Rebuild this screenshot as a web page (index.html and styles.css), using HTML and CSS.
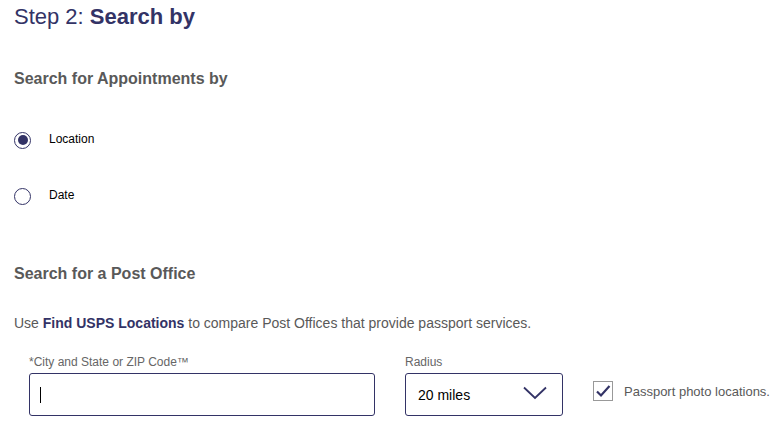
FILE: index.html
```html
<!DOCTYPE html>
<html>
<head>
<meta charset="utf-8">
<link rel="stylesheet" href="styles.css">
</head>
<body>
<div class="page">
  <h1 class="title">Step 2: <strong>Search by</strong></h1>
  <h2 class="section first">Search for Appointments by</h2>
  <div class="radios">
    <label class="radio-row"><span class="radio checked"></span><span class="radio-text">Location</span></label>
    <label class="radio-row"><span class="radio"></span><span class="radio-text">Date</span></label>
  </div>
  <h2 class="section second">Search for a Post Office</h2>
  <p class="intro">Use <strong>Find USPS Locations</strong> to compare Post Offices that provide passport services.</p>
  <div class="form-row">
    <div class="field city">
      <div class="field-label">*City and State or ZIP Code™</div>
      <div class="input"><span class="caret"></span></div>
    </div>
    <div class="field radius">
      <div class="field-label">Radius</div>
      <div class="select">
        <span class="select-value">20 miles</span>
        <svg class="chevron" width="24" height="14" viewBox="0 0 24 14"><path d="M1 1.5 L12 12 L23 1.5" fill="none" stroke="#333366" stroke-width="1.8"/></svg>
      </div>
    </div>
    <div class="field photo">
      <label class="check-row">
        <span class="checkbox"><svg width="16" height="14" viewBox="0 0 16 14"><path d="M2 7.5 L6 11.5 L14.5 2" fill="none" stroke="#333366" stroke-width="2.2"/></svg></span>
        <span class="check-text">Passport photo locations.</span>
      </label>
    </div>
  </div>
</div>
</body>
</html>
```
FILE: styles.css
```css
html, body {
  margin: 0;
  padding: 0;
  background: #ffffff;
}
body {
  font-family: "Liberation Sans", Arial, sans-serif;
  color: #333333;
}
.page {
  padding: 0 14px;
}
.title {
  margin: 0;
  font-size: 22px;
  line-height: 34px;
  font-weight: normal;
  color: #333366;
}
.title strong {
  font-weight: bold;
}
.section {
  margin: 0;
  font-size: 16px;
  line-height: 20px;
  font-weight: bold;
  color: #595959;
}
.section.first {
  margin-top: 35px;
}
.section.second {
  margin-top: 58px;
}
.radios {
  display: flex;
  flex-direction: column;
  gap: 36px;
  margin-top: 41px;
}
.radio-row {
  display: flex;
  align-items: center;
  height: 20px;
}
.radio {
  box-sizing: border-box;
  width: 17px;
  height: 17px;
  border: 1.5px solid #333366;
  border-radius: 50%;
  display: flex;
  align-items: center;
  justify-content: center;
}
.radio.checked::after {
  content: "";
  width: 10px;
  height: 10px;
  border-radius: 50%;
  background: #333366;
}
.radio-text {
  margin-left: 18px;
  font-size: 12px;
  line-height: 18px;
  padding-bottom: 2px;
  color: #000000;
}
.intro {
  margin: 29px 0 0;
  font-size: 14px;
  line-height: 20px;
  color: #595959;
}
.intro strong {
  color: #333366;
}
.form-row {
  display: flex;
  margin-top: 19px;
  padding-left: 15px;
  gap: 30px;
}
.field {
  flex-shrink: 0;
}
.field-label {
  font-size: 12px;
  line-height: 16px;
  padding-top: 2px;
  color: #666666;
  margin-bottom: 3px;
}
.input {
  box-sizing: border-box;
  width: 346px;
  height: 43px;
  border: 1px solid #333366;
  border-radius: 3px;
  display: flex;
  align-items: center;
  padding-left: 10px;
}
.caret {
  width: 1px;
  height: 16px;
  background: #000000;
}
.select {
  box-sizing: border-box;
  width: 158px;
  height: 43px;
  border: 1px solid #333366;
  border-radius: 3px;
  display: flex;
  align-items: center;
  justify-content: space-between;
  padding: 0 15px 0 12px;
}
.select-value {
  font-size: 14px;
  color: #000000;
  padding-top: 1px;
}
.chevron {
  margin-top: -3px;
}
.photo {
  padding-top: 29px;
}
.check-row {
  display: flex;
  align-items: center;
  white-space: nowrap;
}
.checkbox {
  box-sizing: border-box;
  width: 20px;
  height: 20px;
  border: 1px solid #999999;
  display: flex;
  align-items: center;
  justify-content: center;
}
.check-text {
  margin-left: 11px;
  font-size: 13px;
  color: #595959;
}
```
